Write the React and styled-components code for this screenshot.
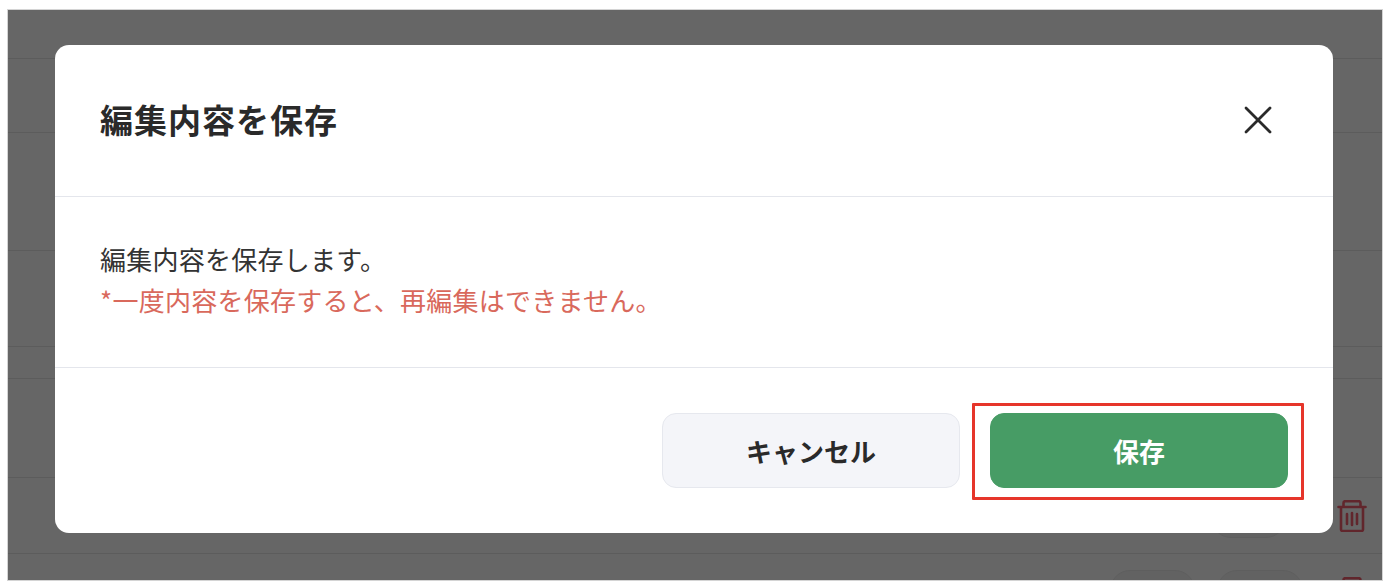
import React from "react";
import styled, { createGlobalStyle } from "styled-components";

const Global = createGlobalStyle`
  html, body { margin: 0; padding: 0; background: #fff; }
  body { font-family: "Noto Sans CJK JP", "Noto Sans", sans-serif; overflow: hidden; }
  * { box-sizing: border-box; }
`;

const Frame = styled.div`
  position: relative;
  width: 1394px;
  height: 588px;
  padding: 10px 12px 8px 8px;
  background: #fff;
`;

const Backdrop = styled.div`
  position: relative;
  height: 570px;
  background: #fff;
  box-shadow: 0 0 0 1px #d4d4d4;
  overflow: hidden;
`;

const Row = styled.div`
  height: ${(p) => p.$h}px;
  border-bottom: 1px solid #e6e6e6;
  display: flex;
  justify-content: flex-end;
  align-items: flex-start;
  gap: 22px;
  padding-right: 15px;
`;

const Pill = styled.div`
  width: ${(p) => p.$w}px;
  height: 60px;
  margin-top: ${(p) => p.$top}px;
  margin-right: ${(p) => p.$right || 0}px;
  border: 1px solid #ececec;
  border-radius: 20px;
  background: #f4f4f4;
  flex: none;
`;

const TrashIcon = styled.svg`
  width: 30px;
  height: 32px;
  flex: none;
  margin-top: ${(p) => p.$top}px;
  margin-left: 12px;
  color: #f2606f;
`;

const Overlay = styled.div`
  position: absolute;
  inset: 0;
  background: rgba(0, 0, 0, 0.6);
  padding: 35px 49px 47px 47px;
`;

const Modal = styled.div`
  height: 488px;
  background: #fff;
  border-radius: 14px;
  display: flex;
  flex-direction: column;
  color: #2a2a2a;
`;

const Header = styled.div`
  height: 152px;
  flex: none;
  display: flex;
  align-items: center;
  justify-content: space-between;
  padding: 0 57px 2px 45px;
  border-bottom: 1px solid #e4e6ec;
`;

const Title = styled.h2`
  margin: 0 0 2px;
  font-size: 33px;
  line-height: 48px;
  font-weight: 700;
  letter-spacing: 1px;
`;

const CloseButton = styled.button`
  width: 36px;
  height: 36px;
  padding: 0;
  border: 0;
  background: none;
  color: #2a2a2a;
  display: flex;
  align-items: center;
  justify-content: center;
`;

const Body = styled.div`
  height: 171px;
  flex: none;
  padding: 41px 45px 0;
  border-bottom: 1px solid #e4e6ec;
  font-size: 26px;
  line-height: 41px;
  letter-spacing: 0.25px;
`;

const Line = styled.p`
  margin: 0;
  color: ${(p) => p.$color || "#333"};
`;

const Footer = styled.div`
  flex: 1;
  display: flex;
  justify-content: flex-end;
  align-items: flex-start;
  gap: 30px;
  padding: 45px 45px 0 0;
`;

const ActionButton = styled.button`
  position: relative;
  width: 298px;
  height: 75px;
  border-radius: 14px;
  font-family: inherit;
  font-size: 26px;
  font-weight: 700;
  border: 1px solid ${(p) => (p.$primary ? "#479c65" : "#e6e8ee")};
  background: ${(p) => (p.$primary ? "#479c65" : "#f4f5f9")};
  color: ${(p) => (p.$primary ? "#fff" : "#2a2a2a")};
`;

const Callout = styled.span`
  position: absolute;
  left: -19px;
  top: -11px;
  width: 332px;
  height: 97px;
  border: 3px solid #e6352a;
  border-radius: 1px;
  pointer-events: none;
`;

const Trash = ({ top }) => (
  <TrashIcon $top={top} viewBox="0 0 30 32" fill="none" stroke="currentColor" strokeWidth="2.6" strokeLinecap="round" strokeLinejoin="round">
    <path d="M1.5 7h27" />
    <path d="M6.5 6.5V3a1.8 1.8 0 0 1 1.8-1.8h13.4A1.8 1.8 0 0 1 23.5 3v3.5" />
    <path d="M4 7.5v22a1.5 1.5 0 0 0 1.5 1.5h19a1.5 1.5 0 0 0 1.5-1.5v-22" />
    <path d="M10 14v10M15 13v12M20 14v10" />
  </TrashIcon>
);

export default function App() {
  return (
    <Frame>
      <Global />
      <Backdrop>
        <Row $h={49} />
        <Row $h={74} />
        <Row $h={118} />
        <Row $h={96} />
        <Row $h={32} />
        <Row $h={99} />
        <Row $h={76}>
          <Pill $w={75} $top={0} $right={17} />
          <Trash top={22} />
        </Row>
        <Row $h={30}>
          <Pill $w={85} $top={16} />
          <Pill $w={86} $top={16} />
          <Trash top={23} />
        </Row>
        <Overlay>
          <Modal>
            <Header>
              <Title>編集内容を保存</Title>
              <CloseButton aria-label="閉じる">
                <svg width="30" height="30" viewBox="0 0 30 30" fill="none" stroke="currentColor" strokeWidth="2.8" strokeLinecap="round">
                  <path d="M3 3l24 24M27 3L3 27" />
                </svg>
              </CloseButton>
            </Header>
            <Body>
              <Line>編集内容を保存します。</Line>
              <Line $color="#d9695c">*一度内容を保存すると、再編集はできません。</Line>
            </Body>
            <Footer>
              <ActionButton>キャンセル</ActionButton>
              <ActionButton $primary>
                保存
                <Callout />
              </ActionButton>
            </Footer>
          </Modal>
        </Overlay>
      </Backdrop>
    </Frame>
  );
}
